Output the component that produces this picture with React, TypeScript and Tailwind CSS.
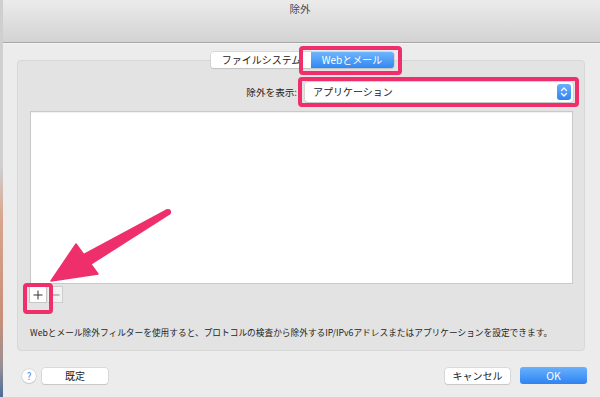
import React from "react";

const PINK = "#ef2f6c";

function Stepper() {
  return (
    <div className="w-[14px] h-[16px] rounded-[3px] bg-gradient-to-b from-[#69b0fb] to-[#2f83f2] flex items-center justify-center">
      <svg width="8" height="12" viewBox="0 0 8 12">
        <path d="M1.5 4.5 L4 2 L6.5 4.5" fill="none" stroke="white" strokeWidth="1.3" strokeLinecap="round" strokeLinejoin="round" />
        <path d="M1.5 7.5 L4 10 L6.5 7.5" fill="none" stroke="white" strokeWidth="1.3" strokeLinecap="round" strokeLinejoin="round" />
      </svg>
    </div>
  );
}

export default function App() {
  return (
    <div
      className="relative w-[600px] h-[397px] overflow-hidden bg-[#ececec] flex text-[#222]"
      style={{ fontFamily: '"Noto Sans CJK JP", "Noto Sans", sans-serif' }}
    >
      {/* desktop sliver on the left */}
      <div className="w-[3px] h-full bg-[linear-gradient(to_bottom,#cfcfcf_0%,#cfcfcf_42%,#d8a58c_55%,#c98f78_80%,#9a8f94_92%,#4a6c9e_100%)]" />

      <div className="flex-1 flex flex-col">
        {/* title bar */}
        <div className="h-[43px] bg-gradient-to-b from-[#ebebeb] to-[#d3d3d3] border-b border-[#a6a6a6] flex justify-center">
          <span className="text-[10.5px] leading-[16px] text-[#4a4a4a] mt-[1px] mr-[3px]">除外</span>
        </div>
        <div className="h-[1px] bg-[#f4f4f4]" />

        {/* group box */}
        <div className="ml-[14px] mr-[15px] mt-[16px] h-[291px] rounded-[4px] bg-[#e3e3e3] border border-[#d7d7d7] flex flex-col pl-[12px] pr-[11px]">
          {/* tabs */}
          <div className="-mt-[9px] h-[16px] flex justify-center ml-[1px]">
            <div className="flex h-[16px] rounded-[3px] shadow-[0_0_0_0.5px_#c4c4c4,0_1px_1px_rgba(0,0,0,0.15)]">
              <div className="w-[98px] bg-white rounded-l-[3px] flex items-center justify-center text-[10px] leading-[16px] pl-[4px]">
                ファイルシステム
              </div>
              <div className="w-[2px] bg-white" />
              <div className="w-[83px] rounded-r-[3px] bg-gradient-to-b from-[#6db4fb] to-[#3188f3] text-white flex items-center justify-center text-[10px] leading-[16px]">
                Webとメール
              </div>
            </div>
          </div>

          {/* show exclusions row */}
          <div className="mt-[14px] h-[20px] flex items-center justify-end gap-[8px]">
            <span className="text-[9.6px] leading-[20px] text-[#222]">除外を表示:</span>
            <div className="w-[268px] h-[20px] bg-white rounded-[3px] shadow-[0_0_0_0.5px_#c8c8c8,0_1px_1px_rgba(0,0,0,0.12)] flex items-center justify-between pl-[8px] pr-[2px]">
              <span className="text-[10px] leading-[20px]">アプリケーション</span>
              <Stepper />
            </div>
          </div>

          {/* list */}
          <div className="mt-[9px] h-[173px] bg-white border border-[#c9c9c9] shadow-[inset_0_1px_1px_rgba(0,0,0,0.06)]" />

          {/* +/- */}
          <div className="mt-[2px] h-[17px] flex -ml-[1px]">
            <div className="w-[18px] h-[17px] bg-white border border-[#c6c6c6] flex items-center justify-center">
              <svg width="10" height="10" viewBox="0 0 10 10">
                <path d="M5 0.5 V9.5 M0.5 5 H9.5" stroke="#333" strokeWidth="1" />
              </svg>
            </div>
            <div className="w-[15px] h-[17px] ml-[1px] bg-[#f2f2f2] border border-[#cdcdcd] border-l-0 flex items-center justify-center">
              <svg width="9" height="2" viewBox="0 0 9 2">
                <path d="M0.5 1 H8.5" stroke="#888" strokeWidth="1" />
              </svg>
            </div>
          </div>

          {/* description */}
          <div className="mt-[24px] text-[8.7px] leading-[12px] text-[#1e1e1e] whitespace-nowrap">
            Webとメール除外フィルターを使用すると、プロトコルの検査から除外するIP/IPv6アドレスまたはアプリケーションを設定できます。
          </div>
        </div>

        {/* bottom buttons */}
        <div className="mt-[16px] h-[17px] flex items-center pl-[19px] pr-[13px]">
          <div className="w-[14px] h-[14px] rounded-full bg-white shadow-[0_0_0_0.5px_#c4c4c4,0_1px_1px_rgba(0,0,0,0.15)] flex items-center justify-center text-[10px] leading-[14px] text-[#3a86ef] mt-[1px]">
            ?
          </div>
          <div className="ml-[6px] w-[66px] h-[16px] bg-white rounded-[3px] shadow-[0_0_0_0.5px_#c8c8c8,0_1px_1px_rgba(0,0,0,0.15)] flex items-center justify-center text-[10px] leading-[16px]">
            既定
          </div>
          <div className="flex-1" />
          <div className="w-[65px] h-[16px] bg-white rounded-[3px] shadow-[0_0_0_0.5px_#c8c8c8,0_1px_1px_rgba(0,0,0,0.15)] flex items-center justify-center text-[10px] leading-[16px]">
            キャンセル
          </div>
          <div className="ml-[10px] w-[67px] h-[17px] rounded-[3px] bg-gradient-to-b from-[#68b1fb] to-[#2d83f2] flex items-center justify-center text-[10.5px] leading-[17px] text-white">
            OK
          </div>
        </div>
      </div>

      {/* annotations */}
      <div className="absolute left-[299px] top-[46px] w-[103px] h-[29px] rounded-[4px] border-[4px]" style={{ borderColor: PINK }} />
      <div className="absolute left-[298px] top-[77px] w-[281px] h-[30px] rounded-[4px] border-[4px]" style={{ borderColor: PINK }} />
      <div className="absolute left-[23px] top-[283px] w-[30px] h-[31px] rounded-[4px] border-[4px]" style={{ borderColor: PINK }} />
      <svg className="absolute left-0 top-0 pointer-events-none" width="600" height="397" viewBox="0 0 600 397">
        <polygon points="169.6,214.7 166.4,209.3 83.6,253.7 90.4,265.3" fill={PINK} />
        <circle cx="168" cy="212" r="3.1" fill={PINK} />
        <polygon points="51,281 76,244 98,274" fill={PINK} strokeLinejoin="round" stroke={PINK} strokeWidth="1.5" />
      </svg>
    </div>
  );
}
